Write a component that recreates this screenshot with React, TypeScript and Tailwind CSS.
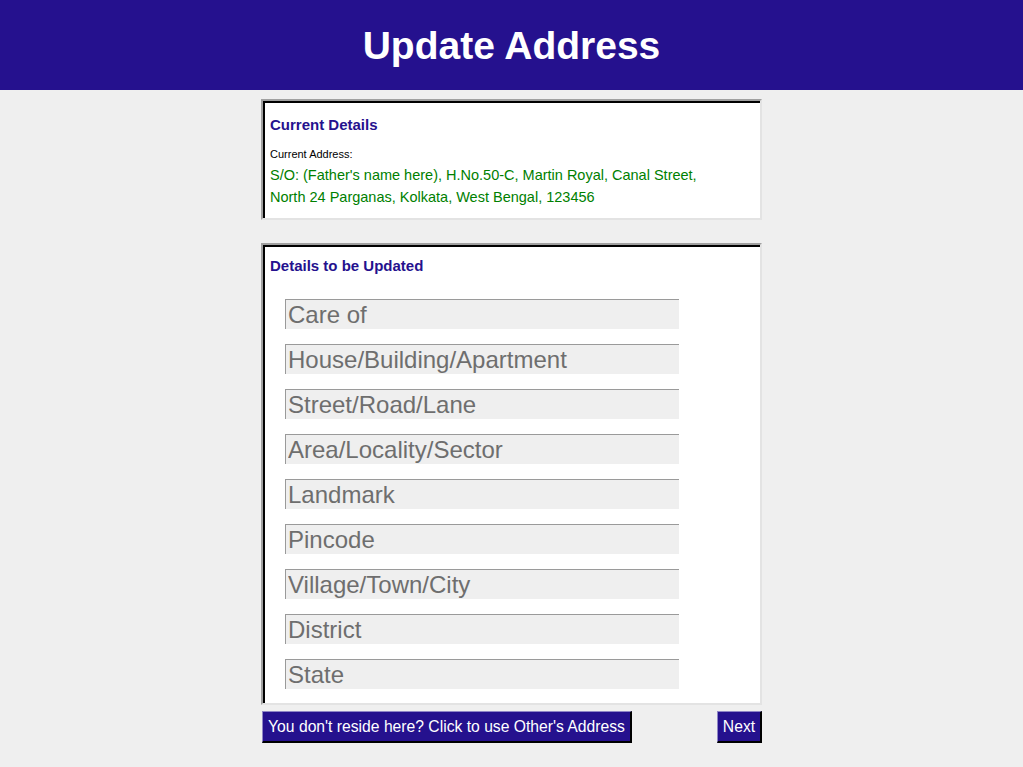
import { FC } from 'react';

const fields = [
  'Care of',
  'House/Building/Apartment',
  'Street/Road/Lane',
  'Area/Locality/Sector',
  'Landmark',
  'Pincode',
  'Village/Town/City',
  'District',
  'State',
];

const Panel: FC<{ children: React.ReactNode; className?: string }> = ({ children, className }) => (
  <div className="border-2 border-t-[#a0a0a0] border-l-[#a0a0a0] border-r-[#e3e3e3] border-b-[#e3e3e3]">
    <div className={`bg-white border-t-2 border-l-2 border-black ${className ?? ''}`}>{children}</div>
  </div>
);

export default function App() {
  return (
    <div
      className="min-h-[767px] bg-[#efefef]"
      style={{ fontFamily: '"Liberation Sans", Arial, sans-serif' }}
    >
      <header className="h-[90px] bg-[#25118e] flex items-center justify-center">
        <h1 className="text-white font-bold text-[39px] leading-none">Update Address</h1>
      </header>

      <main className="w-[501px] mx-auto mt-[9px]">
        <Panel className="pt-[12px] pb-[10px] px-[5px]">
          <h3 className="text-[#25118e] font-bold text-[15px] leading-[20px]">Current Details</h3>
          <p className="mt-[12px] text-[11px] leading-[14px] text-black">Current Address:</p>
          <p className="mt-[3px] text-[14.5px] leading-[22px] text-[#008000]">
            S/O: (Father's name here), H.No.50-C, Martin Royal, Canal Street,
            <br />
            North 24 Parganas, Kolkata, West Bengal, 123456
          </p>
        </Panel>

        <div className="mt-[23px]">
          <Panel className="pt-[9px] pb-[14px] px-[5px]">
            <h3 className="text-[#25118e] font-bold text-[15px] leading-[20px]">Details to be Updated</h3>
            <div className="mt-[23px] ml-[15px] flex flex-col gap-[15px]">
              {fields.map((f) => (
                <input
                  key={f}
                  placeholder={f}
                  className="w-[394px] h-[30px] bg-[#efefef] border-t border-l border-[#9a9a9a] pl-[2px] text-[24px] text-[#555] placeholder:text-[#6e6e6e] outline-none"
                />
              ))}
            </div>
          </Panel>
        </div>

        <div className="mt-[6px] flex justify-between">
          <button className="ml-px h-[32px] w-[370px] bg-[#25118e] text-white text-[15.7px] border-t border-l border-[#8f86c6] border-r-2 border-b-2 border-r-black border-b-black">
            You don't reside here? Click to use Other's Address
          </button>
          <button className="h-[32px] w-[45px] bg-[#25118e] text-white text-[15.7px] border-t border-l border-[#8f86c6] border-r-2 border-b-2 border-r-black border-b-black">
            Next
          </button>
        </div>
      </main>
    </div>
  );
}
